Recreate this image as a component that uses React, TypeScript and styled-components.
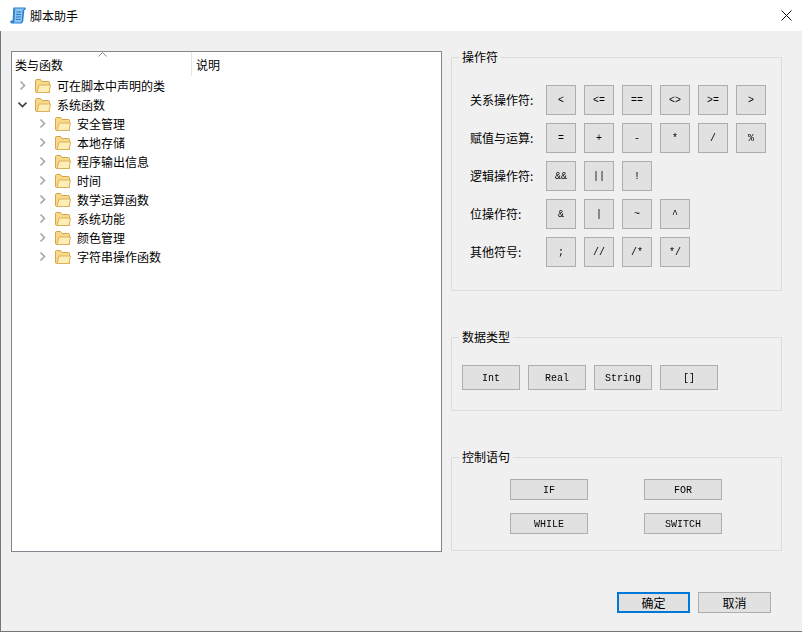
import React from "react";
import styled, {createGlobalStyle} from "styled-components";

const GlobalStyle = createGlobalStyle`
    html, body {
        margin: 0;
        padding: 0;
        background-color: #f0f0f0;
    }
    * {
        box-sizing: border-box;
    }
`;

const uiFont = `"Noto Sans CJK SC", "Liberation Sans", sans-serif`;
const monoFont = `"Liberation Mono", "Noto Sans CJK SC", monospace`;

const Window = styled.div`
    width: 802px;
    height: 632px;
    display: flex;
    flex-direction: column;
    font-family: ${uiFont};
    font-size: 12px;
    color: #000;
    overflow: hidden;
`;

const TitleBar = styled.div`
    height: 31px;
    flex: none;
    display: flex;
    align-items: center;
    background-color: #fff;
    padding: 0 10px;
    gap: 4px;
`;

const TitleText = styled.span`
    flex: 1;
    line-height: 16px;
`;

const Client = styled.div`
    flex: 1;
    display: flex;
    flex-direction: column;
    border-left: 1px solid #767676;
    border-bottom: 1px solid #767676;
`;

const Main = styled.div`
    display: flex;
    align-items: flex-start;
    gap: 9px;
    padding: 18px 20px 0 10px;
`;

const TreePanel = styled.div`
    position: relative;
    width: 431px;
    height: 501px;
    margin-top: 2px;
    background-color: #fff;
    border: 1px solid #828790;
`;

const SortCaret = styled.svg`
    position: absolute;
    left: 86px;
    top: 0;
`;

const TreeHeader = styled.div`
    display: flex;
    height: 24px;
    line-height: 16px;
`;

const HeaderCell = styled.div<{ $width: number; $inset: number; $divider?: boolean }>`
    width: ${(p) => p.$width}px;
    padding: 5px 0 0 ${(p) => p.$inset}px;
    border-right: ${(p) => (p.$divider ? "1px solid #e5e5e5" : "none")};
`;

const TreeRow = styled.div<{ $level: number }>`
    display: flex;
    align-items: center;
    height: 19px;
    padding-left: ${(p) => 6 + p.$level * 20}px;
    line-height: 16px;
`;

const Chevron = styled.svg`
    flex: none;
    margin-right: 8px;
`;

const FolderIcon = styled.svg`
    flex: none;
    margin-right: 6px;
`;

const SidePanel = styled.div`
    width: 331px;
    display: flex;
    flex-direction: column;
    gap: 38px;
`;

const Group = styled.fieldset`
    margin: 0;
    padding: 0;
    min-width: 0;
    border: 1px solid #dcdcdc;
`;

const GroupTitle = styled.legend`
    margin-left: 7px;
    padding: 0 3px;
    line-height: 16px;
`;

const GroupBody = styled.div<{ $padding: string }>`
    padding: ${(p) => p.$padding};
`;

const OpRows = styled.div`
    display: flex;
    flex-direction: column;
    gap: 8px;
`;

const OpRow = styled.div`
    display: flex;
    align-items: center;
    gap: 8px;
`;

const OpLabel = styled.span`
    width: 68px;
    line-height: 16px;
`;

const CodeButton = styled.button<{ $width: number; $height: number }>`
    width: ${(p) => p.$width}px;
    height: ${(p) => p.$height}px;
    margin: 0;
    padding: 1px 0 0;
    background-color: #e1e1e1;
    border: 1px solid #adadad;
    border-radius: 0;
    font-family: ${monoFont};
    font-size: 10px;
    color: #000;
    will-change: transform;
`;

const TypeRow = styled.div`
    display: flex;
    gap: 8px;
`;

const ControlGrid = styled.div`
    display: grid;
    grid-template-columns: 78px 78px;
    column-gap: 56px;
    row-gap: 13px;
`;

const Footer = styled.div`
    margin-top: auto;
    display: flex;
    justify-content: flex-end;
    gap: 8px;
    padding: 0 31px 18px 0;
`;

const DialogButton = styled.button<{ $primary?: boolean }>`
    width: 73px;
    height: 21px;
    margin: 0;
    padding: 0;
    background-color: #e1e1e1;
    border: ${(p) => (p.$primary ? "2px solid #0078d7" : "1px solid #adadad")};
    border-radius: 0;
    font-family: ${uiFont};
    font-size: 12px;
    color: #000;
`;

const ScriptIcon = () => (
    <svg width="16" height="17" viewBox="0 0 16 17">
        <path d="M3.5 0.5H15C15.8 0.5 16 1.5 15.5 2.3L14.3 3.2L13.3 13.5C13.2 15 12.4 16.5 11 16.5H2C0.6 16.5 0 15.3 0.4 13.8L2.6 13.6L3.2 2.5C3.2 1.5 3.3 0.8 3.5 0.5Z" fill="#2a7fd0"/>
        <path d="M4.8 1.6H14.2L12.6 3.4L11.8 13.6C11.7 14.6 11.2 15.4 10.4 15.4H3.8C4.3 14.8 4.4 14 4.4 13.2L5.1 3C5.2 2.3 5.1 1.9 4.8 1.6Z" fill="#8cc6f0"/>
        <path d="M6.3 5H11.3M6.1 7.5H11.1M5.9 10H10.9M5.8 12.4H10.7" stroke="#2a78c8" strokeWidth="1" fill="none"/>
    </svg>
);

const CloseIcon = () => (
    <svg width="11" height="11" viewBox="0 0 11 11">
        <path d="M.5.5l10 10M10.5.5l-10 10" stroke="#111" strokeWidth="1" fill="none"/>
    </svg>
);

const RowChevron = ({open}: { open: boolean }) => (
    <Chevron width="9" height="11" viewBox="0 0 9 11">
        {open
            ? <path d="M0.5 3.5L4.5 7.5L8.5 3.5" stroke="#404040" strokeWidth="1.6" fill="none"/>
            : <path d="M2.5 1.5L6.5 5.5L2.5 9.5" stroke="#a6a6a6" strokeWidth="1.6" fill="none"/>}
    </Chevron>
);

const Folder = () => (
    <FolderIcon width="16" height="14" viewBox="0 0 16 14">
        <path d="M0.5 1.5C0.5 1 1 0.5 1.5 0.5H5.5L7 2.5H13.5C14 2.5 14.5 3 14.5 3.5V13.5H1.5C1 13.5 0.5 13 0.5 12.5Z" fill="#f7d98a" stroke="#d6a24a"/>
        <path d="M2 13.5L4 6H15.5L14 13.5Z" fill="#fdeeb8" stroke="#dfb05a"/>
    </FolderIcon>
);

const treeRows = [
    {label: "可在脚本中声明的类", level: 0, open: false},
    {label: "系统函数", level: 0, open: true},
    {label: "安全管理", level: 1, open: false},
    {label: "本地存储", level: 1, open: false},
    {label: "程序输出信息", level: 1, open: false},
    {label: "时间", level: 1, open: false},
    {label: "数学运算函数", level: 1, open: false},
    {label: "系统功能", level: 1, open: false},
    {label: "颜色管理", level: 1, open: false},
    {label: "字符串操作函数", level: 1, open: false},
];

const operatorRows = [
    {label: "关系操作符:", ops: ["<", "<=", "==", "<>", ">=", ">"]},
    {label: "赋值与运算:", ops: ["=", "+", "-", "*", "/", "%"]},
    {label: "逻辑操作符:", ops: ["&&", "||", "!"]},
    {label: "位操作符:", ops: ["&", "|", "~", "^"]},
    {label: "其他符号:", ops: [";", "//", "/*", "*/"]},
];

const dataTypes = ["Int", "Real", "String", "[]"];
const controls = ["IF", "FOR", "WHILE", "SWITCH"];

const App: React.FC = () => {
    return (
        <Window>
            <GlobalStyle/>
            <TitleBar>
                <ScriptIcon/>
                <TitleText>脚本助手</TitleText>
                <CloseIcon/>
            </TitleBar>
            <Client>
                <Main>
                    <TreePanel>
                        <SortCaret width="9" height="5" viewBox="0 0 9 5">
                            <path d="M0.5 4.5L4.5 0.5L8.5 4.5" stroke="#8a8a8a" fill="none"/>
                        </SortCaret>
                        <TreeHeader>
                            <HeaderCell $width={180} $inset={3} $divider>类与函数</HeaderCell>
                            <HeaderCell $width={200} $inset={4}>说明</HeaderCell>
                        </TreeHeader>
                        {treeRows.map((row) => (
                            <TreeRow key={row.label} $level={row.level}>
                                <RowChevron open={row.open}/>
                                <Folder/>
                                <span>{row.label}</span>
                            </TreeRow>
                        ))}
                    </TreePanel>
                    <SidePanel>
                        <Group>
                            <GroupTitle>操作符</GroupTitle>
                            <GroupBody $padding="20px 0 23px 18px">
                                <OpRows>
                                    {operatorRows.map((row) => (
                                        <OpRow key={row.label}>
                                            <OpLabel>{row.label}</OpLabel>
                                            {row.ops.map((op) => (
                                                <CodeButton key={op} $width={30} $height={30}>{op}</CodeButton>
                                            ))}
                                        </OpRow>
                                    ))}
                                </OpRows>
                            </GroupBody>
                        </Group>
                        <Group>
                            <GroupTitle>数据类型</GroupTitle>
                            <GroupBody $padding="20px 0 20px 10px">
                                <TypeRow>
                                    {dataTypes.map((type) => (
                                        <CodeButton key={type} $width={58} $height={25}>{type}</CodeButton>
                                    ))}
                                </TypeRow>
                            </GroupBody>
                        </Group>
                        <Group>
                            <GroupTitle>控制语句</GroupTitle>
                            <GroupBody $padding="14px 0 16px 58px">
                                <ControlGrid>
                                    {controls.map((control) => (
                                        <CodeButton key={control} $width={78} $height={21}>{control}</CodeButton>
                                    ))}
                                </ControlGrid>
                            </GroupBody>
                        </Group>
                    </SidePanel>
                </Main>
                <Footer>
                    <DialogButton $primary>确定</DialogButton>
                    <DialogButton>取消</DialogButton>
                </Footer>
            </Client>
        </Window>
    );
};

export default App;
